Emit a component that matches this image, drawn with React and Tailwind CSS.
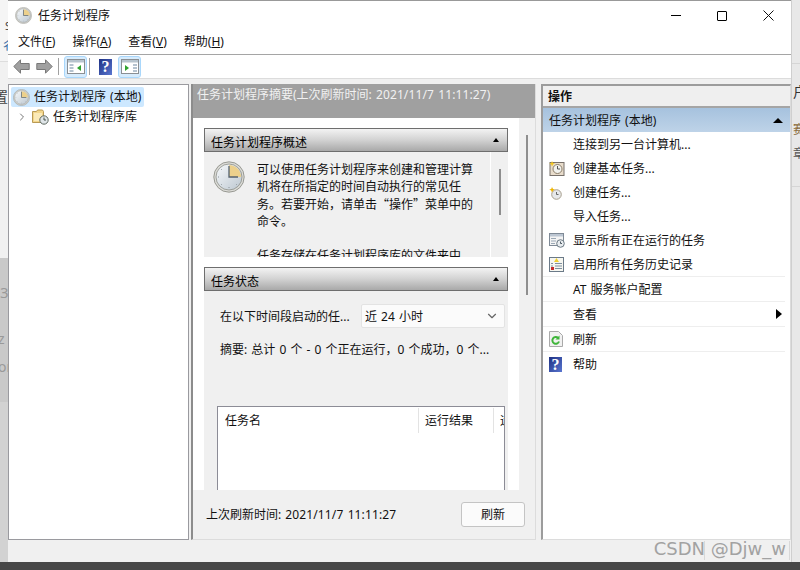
import React from 'react'
import { ChevronRight, ChevronDown } from 'lucide-react'

const font = { fontFamily: '"Noto Sans", "Noto Sans CJK SC", sans-serif' }

function ClockIcon({ size = 18, id = 'face' }) {
  return (
    <svg width={size} height={size} viewBox="0 0 32 32" className="shrink-0">
      <defs>
        <linearGradient id={id} x1="0" y1="0" x2="1" y2="1">
          <stop offset="0" stopColor="#f7f9fb" />
          <stop offset="1" stopColor="#bcc7d0" />
        </linearGradient>
      </defs>
      <circle cx="16" cy="16" r="15.200" fill="#dcdcd8" stroke="#85867f" strokeWidth="0.8" />
      <circle cx="16" cy="16" r="13" fill={`url(#${id})`} stroke="#8d8f88" strokeWidth="0.8" />
      <path d="M16 16V4a12 12 0 0 1 12 12z" fill="#ecd08c" />
      <path d="M16 5v11h9" fill="none" stroke="#55626e" strokeWidth="1.300" />
      <path d="M16 27v-1M5 16h1M8.200 8.200l.7.7M23.800 23.800l-.7-.7M8.200 23.800l.7-.7" stroke="#8b949b" strokeWidth="1" />
    </svg>
  )
}

function FolderClock() {
  return (
    <svg width="17" height="16" viewBox="0 0 17 16" className="shrink-0">
      <path d="M.5 2.500h4l1-1.500h5l1 1.500v11H.5z" fill="#f3d68b" stroke="#b99a55" />
      <rect x="2" y="4" width="8" height="8" fill="#fbeab8" />
      <circle cx="12" cy="11" r="4.200" fill="#dfe5e8" stroke="#5f6a62" />
      <path d="M12 8.500V11h2" fill="none" stroke="#47524c" />
    </svg>
  )
}

function NavArrow({ flip }) {
  return (
    <svg width="17" height="15" viewBox="0 0 17 15" className={flip ? 'scale-x-[-1]' : ''}>
      <path d="M7.500.8.800 7.500l6.700 6.700v-3.700h8.700v-6H7.500z" fill="#a0a0a0" stroke="#787878" />
    </svg>
  )
}

function HelpIcon({ size = 13, h = 16 }) {
  return (
    <div
      className="flex items-center justify-center bg-gradient-to-br from-[#1f3184] to-[#5a76d0] text-white font-bold shrink-0 text-[16px] leading-none"
      style={{ width: size, height: h, fontFamily: '"Liberation Serif", serif' }}
    >
      ?
    </div>
  )
}

function PaneToggle({ right }) {
  return (
    <div className="w-[23px] h-[22px] rounded-[3px] border border-[#a9d7fb] bg-[#d6ebfc] flex items-center justify-center">
      <svg width="18" height="15" viewBox="0 0 18 15">
        <rect x=".5" y=".5" width="17" height="14" fill="#fff" stroke="#8a8f94" />
        <rect x="1" y="1" width="16" height="2.500" fill="#b7c4ce" />
        {right ? (
          <>
            <path d="M4 6v6l4-3z" fill="#2fa32f" />
            <path d="M12 6h4M12 9h4M12 12h4" stroke="#6b86a0" />
          </>
        ) : (
          <>
            <path d="M2.500 6h4M2.500 9h4M2.500 12h4" stroke="#6b86a0" />
            <path d="M14 6v6l-4-3z" fill="#2fa32f" />
          </>
        )}
      </svg>
    </div>
  )
}

function StarClock() {
  return (
    <svg width="16" height="16" viewBox="0 0 16 16">
      <rect x="1" y="1.500" width="14" height="13" fill="#e8dccb" stroke="#77706a" />
      <circle cx="8.500" cy="8" r="4.500" fill="#f2f2ee" stroke="#8b7d68" />
      <path d="M8.500 5v3h2.500" fill="none" stroke="#555" />
      <path d="M3 0l1 2 2 .5-2 1-1 2-.8-2-2-1 2-.5z" fill="#f3c623" />
    </svg>
  )
}

function SmallStarClock() {
  return (
    <svg width="14" height="14" viewBox="0 0 14 14">
      <circle cx="7.500" cy="8.500" r="4.800" fill="#e6e8ea" stroke="#a89f8d" />
      <path d="M7.500 6v2.500h2" fill="none" stroke="#666" />
      <path d="M3 1l1 2 2 .5-2 1-1 2-.8-2-2-1 2-.5z" fill="#efb400" />
    </svg>
  )
}

function WindowClock() {
  return (
    <svg width="16" height="15" viewBox="0 0 16 15">
      <rect x=".5" y=".5" width="14" height="12" fill="#f4f4f4" stroke="#7f8a96" />
      <rect x="1" y="1" width="13" height="2.500" fill="#bcc6d2" />
      <path d="M2 5.500h5M2 8h5M2 10.500h4" stroke="#9ba8b5" />
      <circle cx="11.500" cy="10.500" r="3.800" fill="#e8ecef" stroke="#6c7a84" />
      <path d="M11.500 8.500v2h1.500" fill="none" stroke="#4e5a64" />
    </svg>
  )
}

function HistoryIcon() {
  return (
    <svg width="15" height="15" viewBox="0 0 15 15">
      <rect x=".5" y=".5" width="14" height="14" fill="#f6f6f0" stroke="#6b7a88" />
      <path d="M6 6.500h7M6 9h7M6 11.500h7M2 6.500h2M2 9h2" stroke="#7f8f9f" />
      <path d="M7.500 1 10 5H5z" fill="#f1cf2e" />
      <rect x="2" y="10" width="3" height="3" fill="#c62b2b" />
    </svg>
  )
}

function RefreshIcon() {
  return (
    <svg width="14" height="16" viewBox="0 0 14 16">
      <path d="M.5.500h9l4 4v11H.5z" fill="#f1f1f1" stroke="#a9a9a9" />
      <path d="M10 10.500a3.400 3.400 0 1 1-.8-3.500" fill="none" stroke="#3fb53a" strokeWidth="2" />
      <path d="M10.500 4.500v4h-4z" fill="#3fb53a" />
    </svg>
  )
}

function SectionHeader({ title }) {
  return (
    <div className="h-[24px] shrink-0 border border-[#6e6e6e] bg-gradient-to-b from-[#f3f3f3] via-[#d2d2d2] to-[#a9a9a9] flex items-center justify-between pl-[6px] pr-[8px] text-[12px] text-black">
      <span className="pt-[5px]">{title}</span>
      <span className="w-0 h-0 border-x-[3px] border-x-transparent border-b-[4px] border-b-black" />
    </div>
  )
}

function ActionRow({ icon, label, arrow, line }) {
  return (
    <div className={'h-[25px] shrink-0 mr-[5px] flex items-center relative ' + (line ? 'border-b border-[#eeeeee]' : '')}>
      <div className="w-[30px] pl-[6px] flex justify-start items-center shrink-0">{icon}</div>
      <span className="pt-[1px]">{label}</span>
      {arrow && <span className="absolute right-[3px] top-[7px] w-0 h-0 border-y-[5px] border-y-transparent border-l-[6px] border-l-black" />}
    </div>
  )
}

export default function App() {
  return (
    <div className="w-[800px] h-[570px] flex flex-col overflow-hidden bg-[#474747] text-[12px] text-[#111] [word-spacing:1px]" style={font}>
      <div className="h-[562px] flex shrink-0">
        {/* page behind the window, left side */}
        <div className="w-[8px] shrink-0 flex flex-col overflow-hidden bg-[#d3d3d3] text-[#777] text-[14px] leading-none">
          <div className="h-[62px] bg-[#f5f5f5] border-b border-[#ddd] pt-[20px] overflow-hidden">
            <div className="w-[12px] ml-[5px] text-[11px] text-[#444]">S</div>
            <div className="w-[14px] ml-[1px] mt-[9px] text-[12px] text-[#3a6ea5]">彳</div>
          </div>
          <div className="h-[196px] bg-[#f1f1f1] pt-[28px] text-[#444] overflow-hidden">
            <div className="w-[20px] -ml-[6px]">置</div>
          </div>
          <div className="h-[144px] bg-[#c9c9c9] pt-[27px] text-[#999] overflow-hidden">
            <div className="w-[12px] text-[15px]">3</div>
            <div className="w-[12px] mt-[32px] -ml-[2px]">z</div>
            <div className="w-[12px] mt-[14px] -ml-[2px]">or</div>
          </div>
          <div className="flex-1 bg-[#d2d2d2]" />
        </div>

        <div className="w-[784px] shrink-0 flex flex-col bg-[#f0f0f0] border-r border-[#cfcfcf]">
          <div className="h-[30px] shrink-0 bg-white flex items-center pl-[7px] border-t border-[#999]">
            <ClockIcon size={17} id="title-face" />
            <span className="ml-[6px] text-[12px]">任务计划程序</span>
            <div className="ml-auto flex items-center">
              <div className="w-[46px] flex justify-center">
                <div className="w-[10px] h-px bg-black" />
              </div>
              <div className="w-[46px] flex justify-center">
                <div className="w-[10px] h-[10px] border border-black rounded-[1px]" />
              </div>
              <div className="w-[46px] flex justify-center">
                <svg width="11" height="11" viewBox="0 0 11 11">
                  <path d="M.5.500l10 10M10.500.500l-10 10" stroke="#111" strokeWidth="1" />
                </svg>
              </div>
            </div>
          </div>

          <div className="h-[25px] shrink-0 bg-white flex items-center border-b border-[#a5a5a5] pl-[10px] gap-[17px]">
            <span>文件(<u>F</u>)</span>
            <span>操作(<u>A</u>)</span>
            <span>查看(<u>V</u>)</span>
            <span>帮助(<u>H</u>)</span>
          </div>

          <div className="h-[24px] shrink-0 bg-white flex items-center border-b border-[#dcdcdc] pl-[5px]">
            <NavArrow />
            <div className="w-[6px]" />
            <NavArrow flip />
            <div className="w-px h-[17px] bg-[#a0a0a0] ml-[5px] mr-[5px]" />
            <PaneToggle />
            <div className="w-px h-[17px] bg-[#a0a0a0] ml-[2px] mr-[9px]" />
            <HelpIcon size={13} h={16} />
            <div className="w-[6px]" />
            <PaneToggle right />
          </div>

          <div className="flex-1 min-h-0 flex gap-[2px] pt-[5px]">
            {/* tree */}
            <div className="w-[181px] shrink-0 bg-white border border-[#9a9a9f] pt-[2px] px-[2px]">
              <div className="h-[20px] flex items-center bg-[#cde8ff] rounded-[2px] pl-[2px] gap-[4px] w-[133px]">
                <ClockIcon size={17} id="tree-face" />
                <span>任务计划程序 (本地)</span>
              </div>
              <div className="h-[20px] flex items-center text-[#111]">
                <ChevronRight size={12} className="text-[#777] ml-[5px] shrink-0" />
                <span className="ml-[4px]"><FolderClock /></span>
                <span className="ml-[4px]">任务计划程序库</span>
              </div>
            </div>

            {/* summary */}
            <div className="w-[345px] shrink-0 border-l-2 border-[#8c8c8c] border-r border-r-[#dcdcdc] border-b border-b-[#dcdcdc] bg-white flex flex-col">
              <div className="h-[34px] shrink-0 bg-[#a0a0a0] text-[#f1f1f1] pl-[4px] pt-[2px]">
                任务计划程序摘要(上次刷新时间: <span className="tracking-[0.12px]">2021/11/7 11:11:27</span>)
              </div>
              <div className="flex-1 min-h-0 flex">
                <div className="w-[326px] shrink-0 pl-[11px] pr-[11px] pt-[10px] overflow-hidden">
                  <SectionHeader title="任务计划程序概述" />
                  <div className="h-[105px] bg-[#f0f0f0] flex overflow-hidden">
                    <div className="w-[287px] shrink-0 border-r border-white flex pl-[9px] pt-[9px]">
                      <ClockIcon size={32} id="summary-face" />
                      <p className="ml-[12px] leading-[17px] w-[220px]">
                        可以使用任务计划程序来创建和管理计算机将在所指定的时间自动执行的常见任务。若要开始，请单击<span className="font-['Noto_Sans_CJK_SC']">“操作”</span>菜单中的命令。
                        <br /><br />
                        任务存储在任务计划程序库的文件夹中。
                      </p>
                    </div>
                    <div className="flex-1 flex justify-center pt-[17px]">
                      <div className="w-[2px] h-[46px] bg-[#8e8e8e]" />
                    </div>
                  </div>
                  <div className="h-[10px]" />
                  <SectionHeader title="任务状态" />
                  <div className="h-[200px] bg-[#f0f0f0] pl-[16px] pr-[3px] overflow-hidden">
                    <div className="flex items-center justify-between h-[24px] mt-[13px]">
                      <span className="pt-[1px]">在以下时间段启动的任...</span>
                      <div className="w-[144px] h-[24px] border border-[#e3e3e3] rounded-[2px] bg-[#fbfbfb] flex items-center justify-between pl-[3px] pr-[5px] text-[12px]">
                        <span className="pt-[1px]">近 24 小时</span>
                        <ChevronDown size={14} className="text-[#666]" />
                      </div>
                    </div>
                    <div className="mt-[13px] leading-[18px]">摘要: 总计 0 个 - 0 个正在运行，0 个成功，0 个...</div>
                    <div className="mt-[47px] w-[288px] -ml-[3px] h-[100px] bg-white border border-[#8c8c96]">
                      <div className="h-[26px] flex items-center pt-[1px]">
                        <div className="w-[201px] pl-[7px] h-[25px] flex items-center border-r border-[#e3e3e3]">任务名</div>
                        <div className="w-[75px] pl-[6px] h-[25px] flex items-center border-r border-[#e3e3e3]">运行结果</div>
                        <div className="flex-1 pl-[6px] overflow-hidden whitespace-nowrap">运</div>
                      </div>
                    </div>
                  </div>
                </div>
                <div className="flex-1 bg-[#f0f0f0] flex justify-center pt-[17px]">
                  <div className="w-[2px] h-[160px] bg-[#8e8e8e]" />
                </div>
              </div>
              <div className="h-[49px] shrink-0 bg-[#f0f0f0] flex items-center justify-between pl-[13px] pr-[10px]">
                <span>上次刷新时间: <span className="tracking-[0.12px]">2021/11/7 11:11:27</span></span>
                <div className="w-[64px] h-[25px] rounded-[3px] border border-[#c4c4c4] bg-[#fbfbfb] flex items-center justify-center">刷新</div>
              </div>
            </div>

            {/* actions */}
            <div className="w-[250px] shrink-0 ml-[3px] bg-white border-2 border-[#9c9c9c] border-b-[#dcdcdc] border-b border-r border-r-[#dcdcdc] flex flex-col">
              <div className="h-[22px] shrink-0 bg-[#efefef] border-b-2 border-[#a5a5a5] font-bold flex items-center pl-[5px] pt-[1px]">操作</div>
              <div className="h-[24px] shrink-0 bg-gradient-to-b from-[#a6c2de] to-[#bed3e8] flex items-center justify-between pl-[6px] pr-[7px] pt-[1px] text-[#111]">
                <span>任务计划程序 (本地)</span>
                <span className="w-0 h-0 border-x-[5px] border-x-transparent border-b-[5px] border-b-black" />
              </div>
              <div className="flex flex-col">
                <div className="h-[24px] flex items-center pl-[30px] pt-[1px]">连接到另一台计算机...</div>
                <div className="h-[24px] flex items-center pl-[6px] pt-[1px]"><span className="w-[24px]"><StarClock /></span>创建基本任务...</div>
                <div className="h-[24px] flex items-center pl-[6px] pt-[1px]"><span className="w-[24px]"><SmallStarClock /></span>创建任务...</div>
                <div className="h-[24px] flex items-center pl-[30px] pt-[1px]">导入任务...</div>
                <div className="h-[24px] flex items-center pl-[6px] pt-[1px]"><span className="w-[24px]"><WindowClock /></span>显示所有正在运行的任务</div>
              </div>
              <ActionRow line icon={<HistoryIcon />} label="启用所有任务历史记录" />
              <ActionRow line label="AT 服务帐户配置" />
              <ActionRow line label="查看" arrow />
              <ActionRow line icon={<RefreshIcon />} label="刷新" />
              <ActionRow icon={<HelpIcon size={13} h={15} />} label="帮助" />
            </div>
          </div>

          {/* status bar with its watermark on top */}
          <div className="h-[22px] shrink-0 relative flex justify-end pr-[1px] pt-[1px]">
            <div className="w-[86px] h-[19px] border-x border-[#d8d8d8]" />
            <span className="absolute right-[5px] top-[-1px] text-[18px] leading-[20px] text-[#a2a2a2] whitespace-nowrap [word-spacing:0]" style={{ fontFamily: '"DejaVu Sans", sans-serif' }}>
              CSDN @Djw_w
            </span>
          </div>
        </div>

        {/* page behind the window, right side */}
        <div className="flex-1 flex flex-col bg-[#e8e8e8] text-[#444] text-[14px] leading-none overflow-hidden">
          <div className="h-[64px] shrink-0 border-b border-[#d5d5d5]" />
          <div className="h-[123px] shrink-0 border-b border-[#d5d5d5] pl-[1px]">
            <div className="mt-[21px] text-[#333] w-[20px]">户</div>
            <div className="mt-[25px] text-[#8a6a3a] text-[12px] w-[20px]">赛</div>
            <div className="mt-[12px] text-[#555] text-[12px] w-[20px]">章</div>
          </div>
          <div className="flex-1" />
        </div>
      </div>
    </div>
  )
}
